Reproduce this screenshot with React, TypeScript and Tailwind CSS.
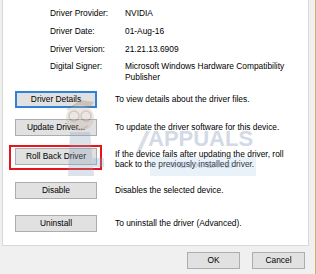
import React from "react";

const font = { fontFamily: '"Liberation Sans", Arial, sans-serif' };

type InfoRow = { label: string; value: string[] };

const info: InfoRow[] = [
  { label: "Driver Provider:", value: ["NVIDIA"] },
  { label: "Driver Date:", value: ["01-Aug-16"] },
  { label: "Driver Version:", value: ["21.21.13.6909"] },
  {
    label: "Digital Signer:",
    value: ["Microsoft Windows Hardware Compatibility", "Publisher"],
  },
];

function WinButton({
  children,
  focused,
  className = "",
}: {
  children: React.ReactNode;
  focused?: boolean;
  className?: string;
}) {
  return (
    <div
      className={`flex items-center justify-center bg-[#e1e1e1] text-black ${
        focused ? "border-2 border-[#2f82d6]" : "border border-[#adadad]"
      } ${className}`}
    >
      {children}
    </div>
  );
}

function Watermark() {
  return (
    <div className="pointer-events-none absolute inset-0">
      {/* mascot */}
      <svg
        className="absolute left-[60px] top-[96px] opacity-30"
        width="60"
        height="84"
        viewBox="0 0 60 84"
      >
        <path d="M6 14 L20 4 L34 6 L30 12 L18 14 Z" fill="#9a7a5a" />
        <ellipse cx="20" cy="22" rx="14" ry="13" fill="#c9b09a" />
        <circle cx="14" cy="20" r="5" fill="none" stroke="#555" strokeWidth="1.5" />
        <circle cx="26" cy="20" r="5" fill="none" stroke="#555" strokeWidth="1.5" />
        <path d="M12 30 Q20 36 28 30" fill="none" stroke="#666" strokeWidth="1.5" />
        <path d="M10 36 L30 36 L34 80 L8 80 Z" fill="#8aa0b8" />
        <rect x="33" y="62" width="11" height="9" fill="#7fb0d8" />
      </svg>
      <svg
        className="absolute left-[136px] top-[131px] opacity-25"
        width="14"
        height="22"
        viewBox="0 0 14 22"
      >
        <path d="M10 0 L14 0 L4 22 L0 22 Z" fill="#6a7ea0" />
      </svg>
      <div
        className="absolute left-[148px] top-[128px] text-[22px] font-bold leading-[22px] text-[#6f86ad] opacity-30"
        style={font}
      >
        APPUALS
      </div>
      <div className="absolute left-[150px] top-[157px] h-[19px] w-[106px] bg-[#a9c6e6] opacity-25" />
      <div
        className="absolute left-[168px] top-[160px] text-[9px] leading-[10px] text-[#6f86ad] opacity-40"
        style={font}
      >
        THE EXPERTS!
      </div>
    </div>
  );
}

export default function App() {
  return (
    <div
      className="relative flex h-[274px] w-[316px] flex-col overflow-hidden bg-[#f0f0f0] text-[8.4px] text-black"
      style={font}
    >
      <div className="flex">
        <div className="ml-[2px] flex h-[246px] w-[307px] flex-col border-x border-b border-[#d9d9d9] bg-white">
          {/* info block */}
          <div className="flex flex-col pl-[47px] pt-[4px]">
            {info.map((row) => (
              <div
                key={row.label}
                className={`flex ${
                  row.value.length > 1
                    ? "pt-[3px] leading-[11px]"
                    : "h-[18px] items-center"
                }`}
              >
                <div className="w-[75px] shrink-0">{row.label}</div>
                <div className="flex flex-col">
                  {row.value.map((v) => (
                    <span key={v}>{v}</span>
                  ))}
                </div>
              </div>
            ))}
          </div>

          {/* action buttons */}
          <div className="flex flex-col pl-[12px]">
            <div className="mt-[8px] flex h-[17px] items-center">
              <WinButton focused className="h-[17px] w-[82px]">
                Driver Details
              </WinButton>
              <span className="ml-[18px]">To view details about the driver files.</span>
            </div>
            <div className="mt-[11px] flex h-[17px] items-center">
              <WinButton className="h-[17px] w-[82px]">Update Driver...</WinButton>
              <span className="ml-[18px]">
                To update the driver software for this device.
              </span>
            </div>
            <div className="relative mt-[12px] flex h-[17px] items-start">
              <WinButton className="h-[17px] w-[82px]">Roll Back Driver</WinButton>
              <div className="ml-[18px] mt-[1px] flex flex-col leading-[10px]">
                <span>If the device fails after updating the driver, roll</span>
                <span>back to the previously installed driver.</span>
              </div>
              <div className="pointer-events-none absolute left-[-6px] top-[-3px] h-[25px] w-[93px] border-2 border-[#e8141c]" />
            </div>
            <div className="mt-[17px] flex h-[17px] items-center">
              <WinButton className="h-[17px] w-[82px]">Disable</WinButton>
              <span className="ml-[18px]">Disables the selected device.</span>
            </div>
            <div className="mt-[16px] flex h-[17px] items-center">
              <WinButton className="h-[17px] w-[82px]">Uninstall</WinButton>
              <span className="ml-[18px]">To uninstall the driver (Advanced).</span>
            </div>
          </div>
        </div>
        <div className="ml-auto w-px self-stretch bg-[#c9b46a]" />
      </div>

      {/* dialog buttons */}
      <div className="flex flex-1">
        <div className="ml-[187px] mt-[6px] flex gap-[12px]">
          <WinButton className="h-[17px] w-[53px]">OK</WinButton>
          <WinButton className="h-[17px] w-[53px]">Cancel</WinButton>
        </div>
        <div className="ml-auto w-px self-stretch bg-[#c9b46a]" />
      </div>

      <Watermark />
    </div>
  );
}
